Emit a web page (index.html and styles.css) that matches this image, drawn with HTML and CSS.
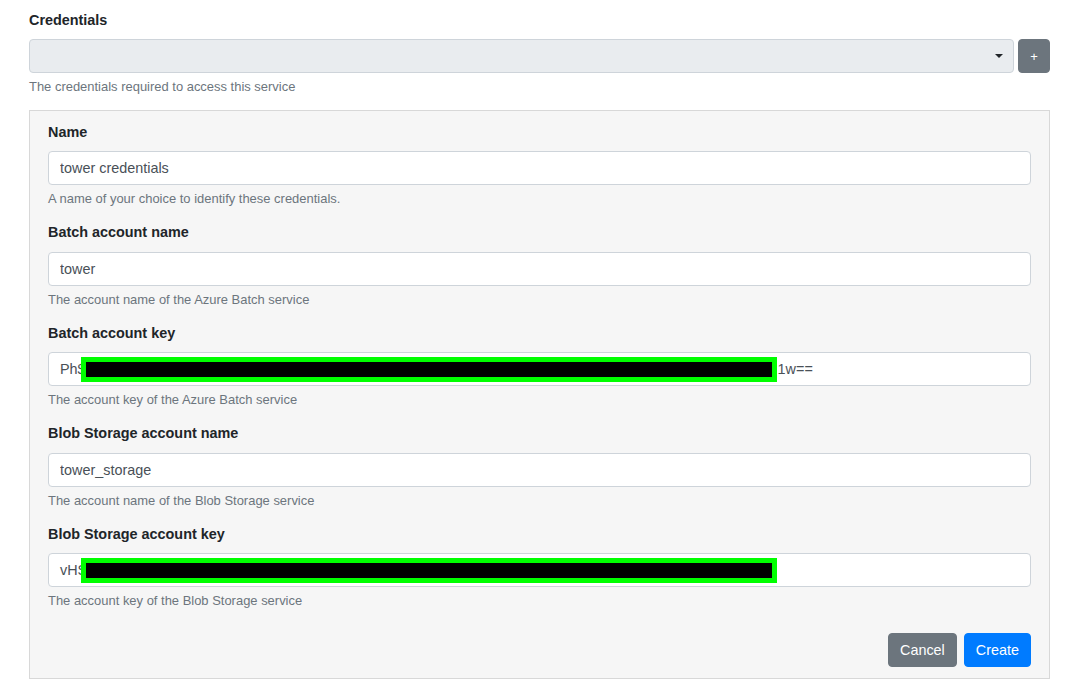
FILE: index.html
```html
<!DOCTYPE html>
<html lang="en">
<head>
<meta charset="utf-8">
<title>Credentials</title>
<link rel="stylesheet" href="styles.css">
</head>
<body>
<div class="page">
  <div class="field top">
    <label class="label">Credentials</label>
    <div class="select-row">
      <div class="select"><span class="caret"></span></div>
      <button class="btn btn-add" type="button">+</button>
    </div>
    <div class="help">The credentials required to access this service</div>
  </div>

  <div class="panel">
    <div class="field">
      <label class="label">Name</label>
      <input class="control" type="text" value="tower credentials">
      <div class="help">A name of your choice to identify these credentials.</div>
    </div>
    <div class="field">
      <label class="label">Batch account name</label>
      <input class="control" type="text" value="tower">
      <div class="help">The account name of the Azure Batch service</div>
    </div>
    <div class="field">
      <label class="label">Batch account key</label>
      <div class="control secret"><span>Ph$</span><span class="redact r1"></span><span class="tail">1w==</span></div>
      <div class="help">The account key of the Azure Batch service</div>
    </div>
    <div class="field">
      <label class="label">Blob Storage account name</label>
      <input class="control" type="text" value="tower_storage">
      <div class="help">The account name of the Blob Storage service</div>
    </div>
    <div class="field">
      <label class="label">Blob Storage account key</label>
      <div class="control secret"><span>vHS</span><span class="redact r2"></span></div>
      <div class="help">The account key of the Blob Storage service</div>
    </div>
    <div class="actions">
      <button class="btn btn-secondary" type="button">Cancel</button>
      <button class="btn btn-primary" type="button">Create</button>
    </div>
  </div>
</div>
</body>
</html>
```

FILE: styles.css
```css
* { box-sizing: border-box; }

body {
  margin: 0;
  background: #ffffff;
  font-family: "Liberation Sans", Arial, Helvetica, sans-serif;
  font-size: 14.4px;
  color: #212529;
}

.page {
  padding: 9.5px 20px 0 29px;
}

.field {
  display: flex;
  flex-direction: column;
  margin-bottom: 14px;
}

.label {
  display: block;
  font-weight: bold;
  font-size: 14.4px;
  line-height: 21px;
  margin-bottom: 8.5px;
  color: #212529;
}

.select-row {
  display: flex;
  gap: 4px;
  height: 34px;
}

.select {
  flex: 1;
  height: 34px;
  background: #e9ecef;
  border: 1px solid #ced4da;
  border-radius: 4px;
  display: flex;
  align-items: center;
  justify-content: flex-end;
  padding-right: 10px;
}

.caret {
  width: 0;
  height: 0;
  border-left: 4px solid transparent;
  border-right: 4px solid transparent;
  border-top: 4px solid #212529;
}

.help {
  margin-top: 4px;
  font-size: 12.96px;
  line-height: 19px;
  color: #6c757d;
}

.panel {
  background: #f6f6f6;
  border: 1px solid #d8d8d8;
  padding: 10.5px 18px 11px 18px;
}

.control {
  display: block;
  width: 100%;
  height: 34px;
  padding: 0 11px;
  font-family: inherit;
  font-size: 14.4px;
  color: #495057;
  background: #ffffff;
  border: 1px solid #ced4da;
  border-radius: 4px;
  outline: none;
}

.secret {
  display: flex;
  align-items: center;
  white-space: nowrap;
}

.redact {
  display: inline-block;
  height: 25px;
  width: 696px;
  background: #000000;
  border: 5px solid #00ff00;
  margin-left: -5px;
}

.r2 {
  margin-left: -6px;
}

.tail {
  margin-left: 1px;
}

.actions {
  display: flex;
  justify-content: flex-end;
  gap: 7px;
  margin-top: 23px;
}

.btn {
  height: 34px;
  padding: 0 11px;
  border: 1px solid transparent;
  border-radius: 4px;
  font-family: inherit;
  font-size: 14.4px;
  color: #ffffff;
  cursor: pointer;
}

.btn-add {
  width: 32px;
  padding: 0;
  background: #6c757d;
  border-color: #6c757d;
  font-size: 13px;
}

.btn-secondary {
  background: #6c757d;
  border-color: #6c757d;
}

.btn-primary {
  background: #007bff;
  border-color: #007bff;
}
```
